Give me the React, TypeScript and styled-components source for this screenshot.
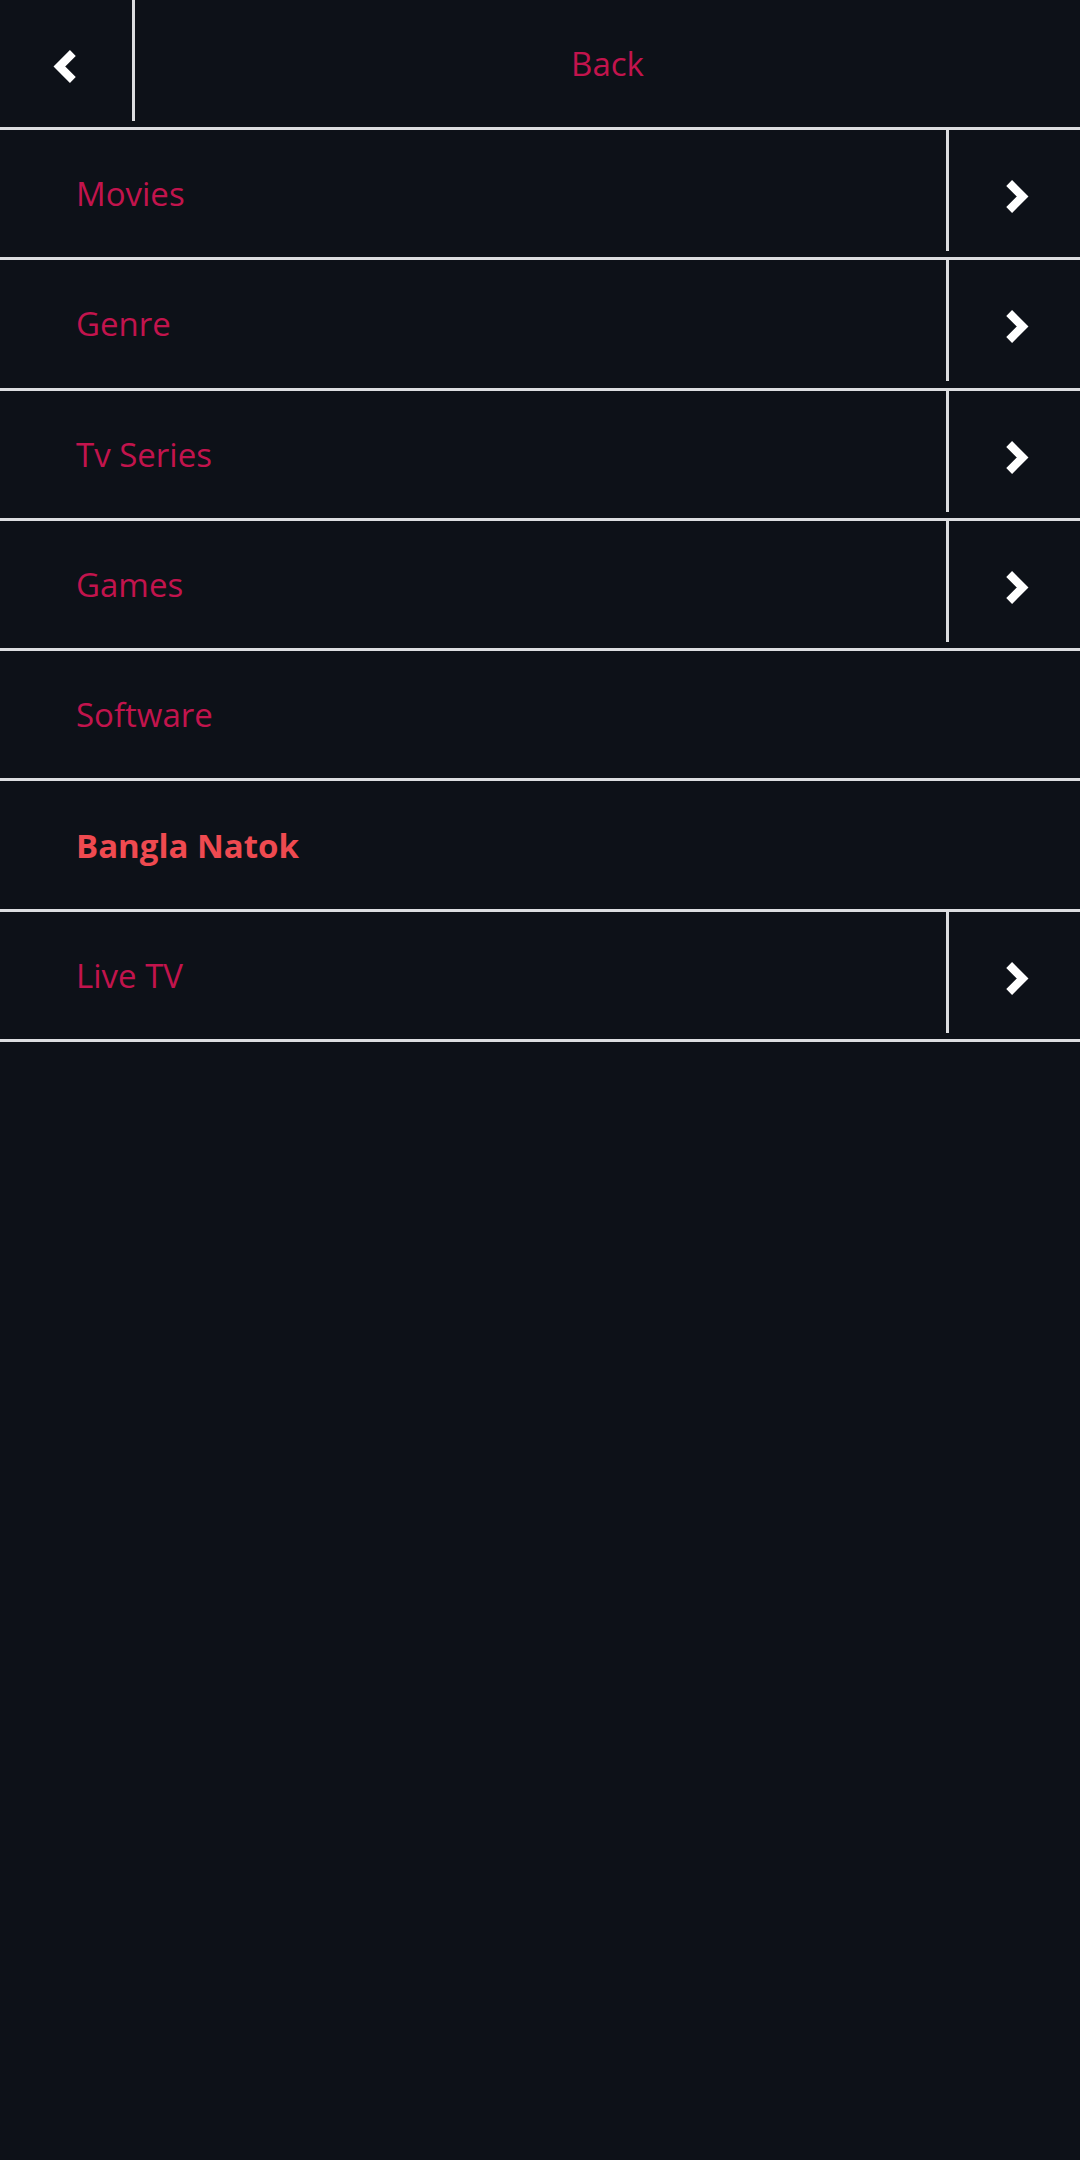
import React from "react";
import styled, { createGlobalStyle } from "styled-components";

const GlobalStyle = createGlobalStyle`
  html, body {
    margin: 0;
    padding: 0;
    background: #0d1118;
  }
  * { box-sizing: border-box; }
`;

const Page = styled.div`
  min-height: 2160px;
  width: 1080px;
  background: #0d1118;
  font-family: "Open Sans", "Noto Sans", sans-serif;
`;

const Header = styled.header`
  display: flex;
  align-items: stretch;
  height: 130px;
  border-bottom: 3px solid #dcdde0;
`;

const Row = styled.div`
  display: flex;
  align-items: stretch;
  height: 130.3px;
  border-bottom: 3px solid #dcdde0;
`;

const IconCell = styled.div<{ $w: number }>`
  width: ${(p) => p.$w}px;
  flex: 0 0 auto;
  display: flex;
  align-items: center;
  justify-content: center;
  padding-top: 6px;
`;

const Divider = styled.div`
  width: 3px;
  height: 121px;
  flex: 0 0 auto;
  align-self: flex-start;
  background: #dcdde0;
`;

const Title = styled.div`
  flex: 1;
  display: flex;
  align-items: center;
  justify-content: center;
  font-size: 33px;
  color: #c2144d;
`;

const Label = styled.div<{ $active?: boolean }>`
  flex: 1;
  display: flex;
  align-items: center;
  padding-left: 76px;
  font-size: 33px;
  font-weight: ${(p) => (p.$active ? 700 : 400)};
  color: ${(p) => (p.$active ? "#ef4a50" : "#c2144d")};
`;

const Chevron = ({ dir, shift }: { dir: "left" | "right"; shift: number }) => (
  <svg
    width="23"
    height="33"
    viewBox="0 0 22 32"
    style={{ transform: `translateX(${shift}px)` }}
  >
    <polyline
      points={dir === "right" ? "2.9,2.9 16,16 2.9,29.1" : "19.1,2.9 6,16 19.1,29.1"}
      fill="none"
      stroke="#ffffff"
      strokeWidth="8"
      strokeLinecap="butt"
      strokeLinejoin="miter"
    />
  </svg>
);

const items: { label: string; arrow: boolean; active?: boolean }[] = [
  { label: "Movies", arrow: true },
  { label: "Genre", arrow: true },
  { label: "Tv Series", arrow: true },
  { label: "Games", arrow: true },
  { label: "Software", arrow: false },
  { label: "Bangla Natok", arrow: false, active: true },
  { label: "Live TV", arrow: true },
];

export default function App() {
  return (
    <Page>
      <GlobalStyle />
      <Header>
        <IconCell $w={132}>
          <Chevron dir="left" shift={-2} />
        </IconCell>
        <Divider />
        <Title>Back</Title>
      </Header>
      {items.map((it) => (
        <Row key={it.label}>
          <Label $active={it.active}>{it.label}</Label>
          {it.arrow && (
            <>
              <Divider />
              <IconCell $w={131}>
                <Chevron dir="right" shift={3} />
              </IconCell>
            </>
          )}
        </Row>
      ))}
    </Page>
  );
}
